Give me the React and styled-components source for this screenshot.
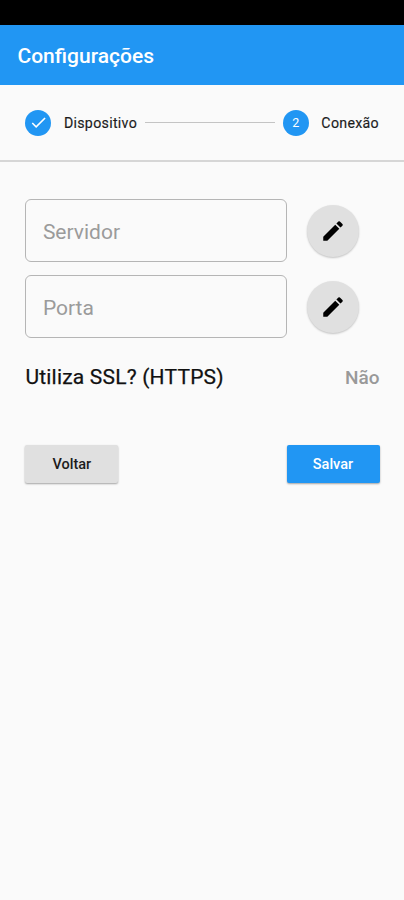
import styled, { createGlobalStyle } from "styled-components";
import { MdCheck, MdEdit } from "react-icons/md";

const GlobalStyle = createGlobalStyle`
  * {
    box-sizing: border-box;
  }

  body {
    margin: 0;
    background: #fafafa;
    color: #1c1c1c;
    font-family: Roboto, sans-serif;
  }
`;

const StyledScreen = styled.div`
  display: flex;
  flex-direction: column;
  height: 100vh;
  overflow: hidden;
`;

const StyledStatusBar = styled.div`
  height: 25px;
  flex-shrink: 0;
  background: #000;
`;

const StyledHeader = styled.header`
  display: flex;
  align-items: center;
  height: 60px;
  flex-shrink: 0;
  padding: 2px 17.5px 0;
  background: #2196f3;
`;

const StyledTitle = styled.h1`
  margin: 0;
  color: #fff;
  font-size: 21px;
  font-weight: 500;
`;

const StyledStepper = styled.nav`
  display: flex;
  align-items: center;
  height: 77px;
  flex-shrink: 0;
  padding: 0 25px 0 25.4px;
  border-bottom: 2px solid #d6d6d6;
`;

const StyledStepCircle = styled.span`
  display: flex;
  align-items: center;
  justify-content: center;
  width: 26px;
  height: 26px;
  border-radius: 50%;
  background: #2196f3;
  color: #fff;
  font-size: 12.5px;
`;

const StyledStepLabel = styled.span`
  margin-left: 12.5px;
  padding-top: 1px;
  font-size: 14.2px;
  letter-spacing: 0.3px;
  -webkit-text-stroke: 0.15px #1c1c1c;
`;

const StyledStepLine = styled.span`
  flex: 1;
  height: 1px;
  margin: 0 8px;
  background: #c4c4c4;
`;

const StyledForm = styled.form`
  display: flex;
  flex-direction: column;
  padding: 37px 24.5px 0 25.4px;
`;

const StyledFieldRow = styled.div`
  display: flex;
  align-items: center;
  gap: 20.5px;
  margin-bottom: 13px;
`;

const StyledInput = styled.input`
  width: 261.5px;
  height: 63px;
  padding: 2px 17px 0 16.5px;
  border: 1px solid #b5b5b5;
  border-radius: 6px;
  background: transparent;
  font-family: inherit;
  font-size: 21px;

  &::placeholder {
    color: #9b9b9b;
    opacity: 1;
  }
`;

const StyledEditButton = styled.button`
  display: flex;
  align-items: center;
  justify-content: center;
  width: 52px;
  height: 52px;
  padding: 0;
  border: none;
  border-radius: 50%;
  background: #e0e0e0;
  color: #000;
  box-shadow: 0 1px 2px rgba(0, 0, 0, 0.22);
`;

const StyledSslRow = styled.div`
  display: flex;
  align-items: center;
  justify-content: space-between;
  height: 30px;
  margin-top: 11px;
`;

const StyledSslLabel = styled.span`
  color: #111;
  font-size: 21px;
  letter-spacing: 0.2px;
  -webkit-text-stroke: 0.25px #111;
`;

const StyledSslValue = styled.span`
  color: #999;
  font-size: 19px;
  font-weight: 500;
`;

const StyledActions = styled.div`
  display: flex;
  justify-content: space-between;
  margin-top: 53px;
`;

const StyledButton = styled.button`
  width: 93px;
  height: 38px;
  padding: 1px 0 0;
  border: none;
  border-radius: 2px;
  background: ${({ $primary }) => ($primary ? "#2196f3" : "#e0e0e0")};
  color: ${({ $primary }) => ($primary ? "#fff" : "#1c1c1c")};
  box-shadow: 0 1px 2px rgba(0, 0, 0, 0.35);
  font-family: inherit;
  font-size: 14.5px;
  font-weight: 500;
`;

function Field({ label }) {
  return (
    <StyledFieldRow>
      <StyledInput placeholder={label} />
      <StyledEditButton type="button">
        <MdEdit size={26} />
      </StyledEditButton>
    </StyledFieldRow>
  );
}

export default function App() {
  return (
    <StyledScreen>
      <GlobalStyle />
      <StyledStatusBar />
      <StyledHeader>
        <StyledTitle>Configurações</StyledTitle>
      </StyledHeader>
      <StyledStepper>
        <StyledStepCircle>
          <MdCheck size={19} />
        </StyledStepCircle>
        <StyledStepLabel>Dispositivo</StyledStepLabel>
        <StyledStepLine />
        <StyledStepCircle>2</StyledStepCircle>
        <StyledStepLabel>Conexão</StyledStepLabel>
      </StyledStepper>
      <StyledForm>
        <Field label="Servidor" />
        <Field label="Porta" />
        <StyledSslRow>
          <StyledSslLabel>Utiliza SSL? (HTTPS)</StyledSslLabel>
          <StyledSslValue>Não</StyledSslValue>
        </StyledSslRow>
        <StyledActions>
          <StyledButton type="button">Voltar</StyledButton>
          <StyledButton type="button" $primary>
            Salvar
          </StyledButton>
        </StyledActions>
      </StyledForm>
    </StyledScreen>
  );
}
